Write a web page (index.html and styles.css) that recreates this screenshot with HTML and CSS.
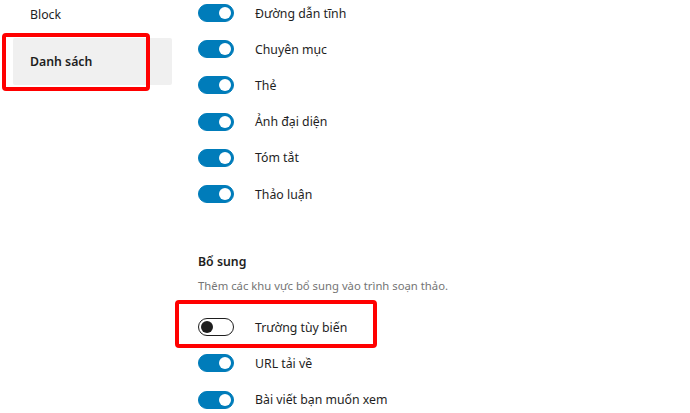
FILE: index.html
```html
<!DOCTYPE html>
<html lang="vi">
<head>
    <meta charset="UTF-8">
    <meta name="viewport" content="width=device-width, initial-scale=1.0">
    <link rel="stylesheet" href="styles.css">
    <title>Tùy chọn</title>
</head>

<body>
    <div class="prefs">
        <div class="sidebar">
            <div class="tab">Block</div>
            <div class="tab active">Danh sách</div>
        </div>

        <div class="content">
            <div class="group first">
                <div class="row"><span class="toggle on"></span><span class="label">Đường dẫn tĩnh</span></div>
                <div class="row"><span class="toggle on"></span><span class="label">Chuyên mục</span></div>
                <div class="row"><span class="toggle on"></span><span class="label">Thẻ</span></div>
                <div class="row"><span class="toggle on"></span><span class="label">Ảnh đại diện</span></div>
                <div class="row"><span class="toggle on"></span><span class="label">Tóm tắt</span></div>
                <div class="row"><span class="toggle on"></span><span class="label">Thảo luận</span></div>
            </div>

            <div class="group">
                <h2>Bổ sung</h2>
                <p class="desc">Thêm các khu vực bổ sung vào trình soạn thảo.</p>
                <div class="row"><span class="toggle"></span><span class="label">Trường tùy biến</span></div>
                <div class="row"><span class="toggle on"></span><span class="label">URL tải về</span></div>
                <div class="row"><span class="toggle on"></span><span class="label">Bài viết bạn muốn xem</span></div>
            </div>
        </div>

        <!-- highlight boxes drawn over the screenshot -->
        <div class="mark mark-tab"></div>
        <div class="mark mark-field"></div>
    </div>
</body>

</html>
```

FILE: styles.css
```css
body {
    margin: 0;
    padding: 0;
    background-color: #ffffff;
    font-family: "Segoe UI", "Noto Sans", "Liberation Sans", sans-serif;
    font-size: 12.3px;
    color: #1e1e1e;
    overflow: hidden;
}

.prefs {
    position: relative;
    display: grid;
    grid-template-columns: 172px 1fr;
    height: 413px;
}

.sidebar {
    margin-top: -9px;
    padding-left: 13px;
}

.tab {
    height: 47px;
    display: flex;
    align-items: center;
    padding-left: 17px;
    border-radius: 2px;
}

.tab.active {
    background-color: #f0f0f0;
    font-weight: 600;
}

.content {
    padding-left: 26px;
}

.group.first {
    margin-top: -5px;
}

.row {
    height: 36.2px;
    display: flex;
    align-items: center;
}

.toggle {
    position: relative;
    width: 36px;
    height: 18px;
    box-sizing: border-box;
    border: 1px solid #1e1e1e;
    border-radius: 9px;
    background-color: #ffffff;
    margin-right: 21px;
    flex-shrink: 0;
}

.toggle::after {
    content: "";
    position: absolute;
    top: 2px;
    left: 2px;
    width: 12px;
    height: 12px;
    border-radius: 50%;
    background-color: #1e1e1e;
}

.toggle.on {
    border-color: #007cba;
    background-color: #007cba;
}

.toggle.on::after {
    left: 20px;
    background-color: #ffffff;
}

h2 {
    margin: 40px 0 0;
    font-size: 12.3px;
    font-weight: 600;
    line-height: 20px;
}

.desc {
    margin: 6px 0 15px;
    font-size: 11.3px;
    line-height: 16px;
    color: #757575;
}

.mark {
    position: absolute;
    border: 4px solid #ff0000;
    border-radius: 4px;
    box-sizing: border-box;
}

.mark-tab {
    left: 2px;
    top: 33px;
    width: 148px;
    height: 58px;
}

.mark-field {
    left: 175px;
    top: 300px;
    width: 202px;
    height: 48px;
}
```
